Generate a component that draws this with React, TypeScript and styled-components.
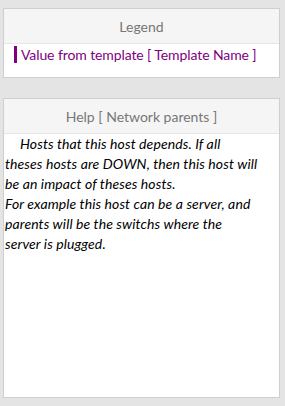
import styled, { createGlobalStyle } from "styled-components";

const GlobalStyle = createGlobalStyle`
  html, body {
    margin: 0;
    padding: 0;
    background: #e4e4e4;
    font-family: Lato, "Open Sans", sans-serif;
  }
`;

const Page = styled.div`
  display: flex;
  flex-direction: column;
  gap: 20px;
  padding: 8px 5px 8px 3px;
  height: 406px;
  box-sizing: border-box;
`;

type PanelProps = {
  $grow?: boolean;
};

const Panel = styled.div<PanelProps>`
  display: flex;
  flex-direction: column;
  background: #fff;
  border: 1px solid #cfcfcf;
  flex: ${({ $grow }) => ($grow ? 1 : "none")};
`;

const PanelHeading = styled.div`
  height: 34px;
  display: flex;
  align-items: center;
  justify-content: center;
  background: #f5f5f5;
  border-bottom: 1px solid #e6e6e6;
  color: #777;
  font-size: 14px;
`;

const LegendBody = styled.div`
  padding: 2px 10px 14px 10px;
`;

const LegendItem = styled.div`
  border-left: 3px solid #800080;
  padding-left: 4px;
  color: #800080;
  font-size: 14px;
  line-height: 17px;
  letter-spacing: -0.1px;
`;

const HelpBody = styled.div`
  padding: 0 8px 0 1px;
  font-size: 14px;
  line-height: 20px;
  letter-spacing: 0.1px;
  font-style: italic;
  color: #000;
`;

const HelpPara = styled.p`
  margin: 0;
  text-indent: 15px;
`;

export default function App() {
  return (
    <>
      <GlobalStyle />
      <Page>
        <Panel>
          <PanelHeading>Legend</PanelHeading>
          <LegendBody>
            <LegendItem>Value from template [ Template Name ]</LegendItem>
          </LegendBody>
        </Panel>
        <Panel $grow>
          <PanelHeading>Help [ Network parents ]</PanelHeading>
          <HelpBody>
            <HelpPara>
              Hosts that this host depends. If all
              <br />
              theses hosts are DOWN, then this host will
              <br />
              be an impact of theses hosts.
            </HelpPara>
            For example this host can be a server, and
            <br />
            parents will be the switchs where the
            <br />
            server is plugged.
          </HelpBody>
        </Panel>
      </Page>
    </>
  );
}
